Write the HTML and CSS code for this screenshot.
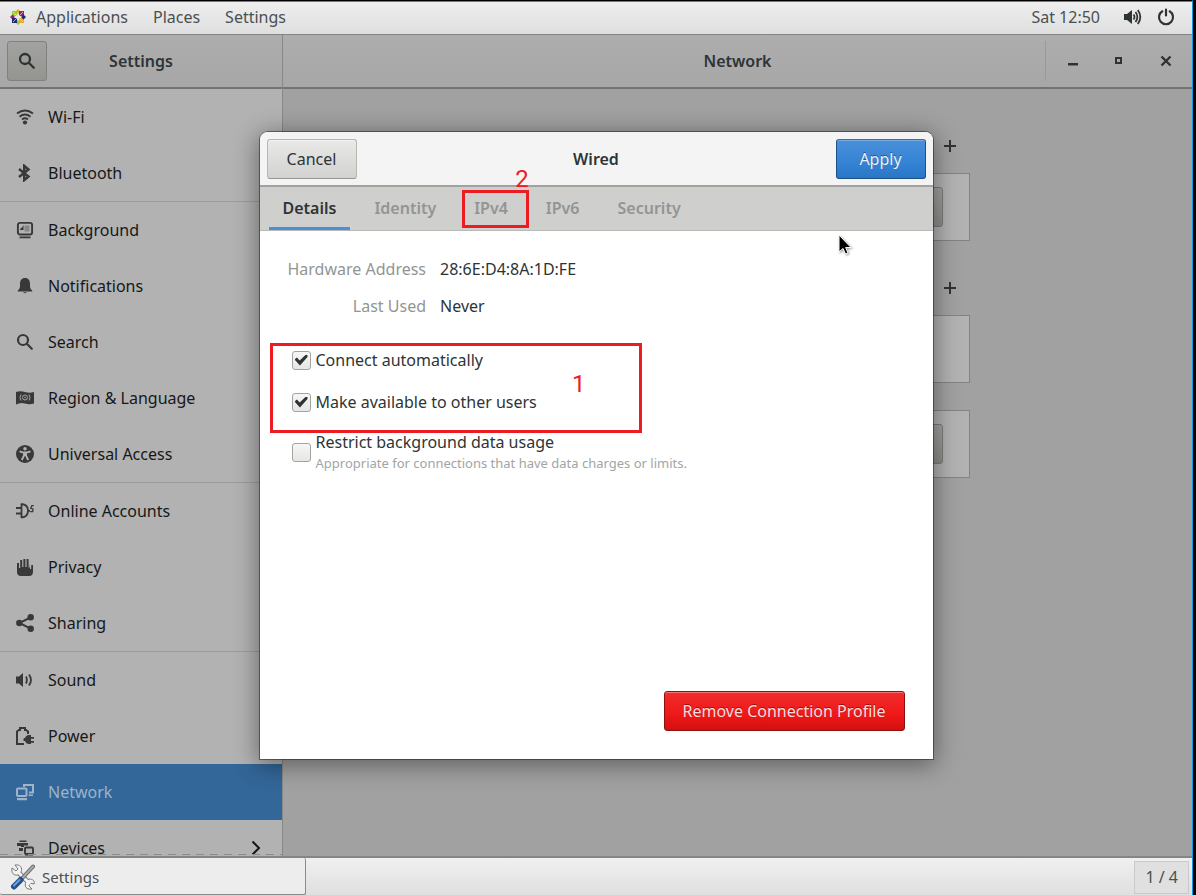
FILE: index.html
```html
<!DOCTYPE html>
<html lang="en">
<head>
<meta charset="utf-8">
<title>Network Settings</title>
<link rel="stylesheet" href="styles.css">
</head>
<body>
<div class="desktop">
  <header class="topbar">
    <nav class="topbar-menu">
      <button class="menu-item" type="button">
        <svg class="distro" viewBox="0 0 16 16" aria-hidden="true">
          <path fill="#efa724" d="M8 0l2.500 2.500L8 5 5.500 2.500zM9 9h5v5H9z"/>
          <path fill="#9ccd2a" d="M2 2h5v5H2zM8 11l2.500 2.500L8 16l-2.500-2.500z"/>
          <path fill="#932279" d="M9 2h5v5H9zM0 8l2.500-2.500L5 8l-2.500 2.500z"/>
          <path fill="#262577" d="M2 9h5v5H2zM11 8l2.500-2.500L16 8l-2.500 2.500z"/>
          <path stroke="#e8e8e8" stroke-width=".7" d="M3 3l10 10M13 3L3 13"/>
        </svg>
        Applications
      </button>
      <button class="menu-item" type="button">Places</button>
      <button class="menu-item" type="button">Settings</button>
    </nav>
    <div class="status">
      <span class="clock">Sat 12:50</span>
      <button class="status-button" type="button" aria-label="Volume">
        <svg class="icon" viewBox="0 0 18 18"><path fill="currentColor" d="M0 6h3l5-4v14l-5-4H0z"/><path fill="none" stroke="currentColor" stroke-width="1.800" d="M9.500 6.500q2 2.500 0 5M11.500 4q3.700 5 0 10M13.800 2q5 7 0 14"/></svg>
      </button>
      <button class="status-button" type="button" aria-label="Power">
        <svg class="icon" viewBox="0 0 18 18" fill="none" stroke="currentColor" stroke-width="2.200" stroke-linecap="round"><path d="M5.300 3.300a7 7 0 1 0 7.400 0M9 1.500v6"/></svg>
      </button>
    </div>
  </header>

  <main class="window">
    <aside class="sidebar">
      <div class="headerbar sidebar-header">
        <button class="search-button" type="button" aria-label="Search">
          <svg class="icon" viewBox="0 0 18 18" fill="none" stroke="currentColor" stroke-width="2.300"><circle cx="7" cy="7" r="5"/><path d="M10.800 10.800l5 5" stroke-linecap="round"/></svg>
        </button>
        <h1 class="title">Settings</h1>
      </div>
      <nav class="panel-list">
        <a class="row" href="#wifi"><svg class="icon" viewBox="0 0 18 18" fill="none" stroke="currentColor" stroke-width="1.900"><path d="M1 5.500q8-6 16 0M3.500 8.700q5.500-4.300 11 0M6 11.500q3-2.300 6 0"/><circle cx="9" cy="14.500" r="2.100" fill="currentColor" stroke="none"/></svg>Wi-Fi</a>
        <a class="row" href="#bluetooth"><svg class="icon" viewBox="0 0 18 18" fill="none" stroke="currentColor" stroke-width="2.400"><path d="M3 5l9.500 7.500L8.200 16.200V1.800l4.300 3.700L3 13"/></svg>Bluetooth</a>
        <a class="row group-start" href="#background"><svg class="icon" viewBox="0 0 18 18"><rect x="1.900" y="1.900" width="14.200" height="11.600" rx="2" fill="none" stroke="currentColor" stroke-width="1.900"/><path fill="currentColor" d="M7.500 4v5H4q0-2 2-2.500zM3.500 15.500h11v1.700h-11z"/><path fill="#888" d="M8.500 4.500h5v6h-5z"/></svg>Background</a>
        <a class="row" href="#notifications"><svg class="icon" viewBox="0 0 18 18" fill="currentColor"><path d="M9 1c3.500 0 5 2.500 5 6 0 3.500 0 4.500 2.200 6.500v1H1.800v-1C4 11.500 4 10.500 4 7c0-3.500 1.500-6 5-6zM7 15.300h4q-2 2-4 0z"/></svg>Notifications</a>
        <a class="row" href="#search"><svg class="icon" viewBox="0 0 18 18" fill="none" stroke="currentColor" stroke-width="2.200"><circle cx="7" cy="7" r="5"/><path d="M10.800 10.800l5 5" stroke-linecap="round"/></svg>Search</a>
        <a class="row" href="#region"><svg class="icon" viewBox="0 0 18 18"><path fill="currentColor" d="M0 3q4.500-1.500 9 0t9 0v11.500q-4.500 1.500-9 0t-9 1z"/><circle cx="9" cy="8.500" r="2.500" fill="none" stroke="#a5a5a5"/><circle cx="9" cy="8.500" r=".8" fill="#a5a5a5"/><path d="M5 5.500q-2 3 0 6M13 5.500q2 3 0 6" fill="none" stroke="#a5a5a5"/></svg>Region &amp; Language</a>
        <a class="row" href="#access"><svg class="icon" viewBox="0 0 18 18"><circle cx="9" cy="9" r="9" fill="currentColor"/><circle cx="9" cy="3.800" r="1.700" fill="#b2b2b2"/><path fill="none" stroke="#b2b2b2" stroke-width="1.800" d="M3.500 6.300L7.500 7.500h3l4-1.200M8 7.500v3L5.800 15M10 7.500v3l2.200 4.500M9 7v4"/></svg>Universal Access</a>
        <a class="row group-start" href="#accounts"><svg class="icon" viewBox="0 0 18 18" fill="none" stroke="currentColor"><path stroke-width="1.800" d="M0 6h5M0 11.500h5M5.500 1.500v14.500M5.500 2q6.500.500 6.500 6.800t-6.500 6.800M12 8.800h2"/><path stroke-width="1.300" d="M17.800 3.600h-2l-1 2.700 2.200.700-.300 2.600h-2.500"/></svg>Online Accounts</a>
        <a class="row" href="#privacy"><svg class="icon" viewBox="0 0 18 18"><path fill="currentColor" d="M1 5h2v5h1.200V2h2v7h1.200V1h2v8h1.200V1h2v8.500h1.200V6h.2V11h1.200V7H17v6.500Q17 18 13 18H5Q1 18 1 14z"/></svg>Privacy</a>
        <a class="row" href="#sharing"><svg class="icon" viewBox="0 0 18 18"><circle cx="3.300" cy="9" r="3.200" fill="currentColor"/><circle cx="14.700" cy="3.300" r="3.200" fill="currentColor"/><circle cx="14.700" cy="14.700" r="3.200" fill="currentColor"/><path d="M14.700 3.300L3.300 9l11.400 5.700" fill="none" stroke="currentColor" stroke-width="2"/></svg>Sharing</a>
        <a class="row group-start" href="#sound"><svg class="icon" viewBox="0 0 18 18"><path fill="currentColor" d="M0 5.500h3l4-3.500v14l-4-3.500H0z"/><path fill="none" stroke="currentColor" stroke-width="1.800" d="M10 5.500q1.700 3.500 0 7M13 3.500q4 5.500 0 11"/></svg>Sound</a>
        <a class="row" href="#power"><svg class="icon" viewBox="0 0 18 18"><path fill="none" stroke="currentColor" stroke-width="2" d="M8 17H1V4.500L3 3h1V1h5v2h1l2 1.500V7"/><path fill="currentColor" d="M8 11h1q1-3 4-3h2v2h3v1.700h-3v2.300h3v1.700h-3V17h-2q-3 0-4-3H7.500v-2z"/></svg>Power</a>
        <a class="row selected" href="#network" aria-current="page"><svg class="icon" viewBox="0 0 18 18"><rect x="1" y="5.500" width="9.500" height="7.500" rx="1" fill="none" stroke="currentColor" stroke-width="2"/><path fill="currentColor" d="M1 15h10v2.200H1zM12.500 11.500H17V13h-4.500z"/><path fill="none" stroke="currentColor" stroke-width="2" d="M8 4V2h9v7.500h-4"/></svg>Network</a>
        <a class="row" href="#devices"><svg class="icon" viewBox="0 0 18 18"><path fill="currentColor" d="M3.500 1.500h7V3h-7zM1 4h11v2.500H8V8H5V7H1zM3 9h4v3H3z"/><rect x="9" y="8.500" width="8" height="6.500" rx="1" fill="none" stroke="currentColor" stroke-width="1.900"/><path fill="currentColor" d="M9 16.500h8V18H9z"/></svg>Devices<svg class="chevron" viewBox="0 0 10 16" fill="none" stroke="currentColor" stroke-width="2"><path d="M1.500 1.500L8 8l-6.500 6.500"/></svg></a>
      </nav>
    </aside>

    <section class="content">
      <div class="headerbar content-header">
        <h2 class="title">Network</h2>
        <div class="window-controls">
          <button type="button" aria-label="Minimize"><svg viewBox="0 0 12 12"><path fill="currentColor" d="M1 8h10v2.500H1z"/></svg></button>
          <button type="button" aria-label="Maximize"><svg viewBox="0 0 12 12" fill="none" stroke="currentColor" stroke-width="2"><path d="M3 3h5v5H3z"/></svg></button>
          <button type="button" aria-label="Close"><svg viewBox="0 0 12 12" fill="none" stroke="currentColor" stroke-width="2.400"><path d="M1.500 1.500l9 9M10.500 1.500l-9 9"/></svg></button>
        </div>
      </div>
      <div class="connections">
        <div class="section-head"><button class="add" type="button" aria-label="Add connection"><svg viewBox="0 0 12 12" stroke="currentColor" stroke-width="2"><path d="M6 0v12M0 6h12"/></svg></button></div>
        <div class="card"><button class="gear" type="button" aria-label="Connection options"></button></div>
        <div class="section-head second"><button class="add" type="button" aria-label="Add VPN"><svg viewBox="0 0 12 12" stroke="currentColor" stroke-width="2"><path d="M6 0v12M0 6h12"/></svg></button></div>
        <div class="card"></div>
        <div class="card proxy"><button class="gear" type="button" aria-label="Proxy options"></button></div>
      </div>
    </section>

    <div class="overlay">
      <form class="dialog" role="dialog" aria-label="Wired">
        <div class="dialog-header">
          <button class="button" type="button">Cancel</button>
          <h2 class="title">Wired</h2>
          <button class="button primary" type="button">Apply</button>
        </div>
        <div class="tabs" role="tablist">
          <button class="tab active" type="button" role="tab" aria-selected="true">Details</button>
          <button class="tab" type="button" role="tab">Identity</button>
          <button class="tab" type="button" role="tab">IPv4<span class="callout tab-callout"><span class="callout-number">2</span></span></button>
          <button class="tab" type="button" role="tab">IPv6</button>
          <button class="tab" type="button" role="tab">Security</button>
        </div>
        <div class="dialog-body">
          <dl class="facts">
            <dt>Hardware Address</dt><dd>28:6E:D4:8A:1D:FE</dd>
            <dt>Last Used</dt><dd>Never</dd>
          </dl>
          <div class="options">
            <label class="check"><input type="checkbox" checked>Connect automatically</label>
            <label class="check"><input type="checkbox" checked>Make available to other users</label>
            <span class="callout options-callout"><span class="callout-number">1</span></span>
          </div>
          <label class="check restrict"><input type="checkbox"><span>Restrict background data usage<small>Appropriate for connections that have data charges or limits.</small></span></label>
          <button class="button danger" type="button">Remove Connection Profile</button>
        </div>
        <svg class="pointer" viewBox="0 0 14 22" aria-hidden="true"><path fill="#000" stroke="#fff" stroke-width="1" d="M1 1v17l4-3.500 2.500 5.500 2.500-1-2.300-5.500H13z"/></svg>
      </form>
    </div>
  </main>

  <footer class="taskbar">
    <button class="task" type="button">
      <svg viewBox="0 0 26 26" aria-hidden="true">
        <path d="M7 7l13 13" stroke="#777" stroke-width="5"/>
        <path d="M2 4l4 3 2-2-3-4c5-1 8 3 6 7l-3 3C4 12 1 9 2 4zM24 20l-4-1-1 3 3 3c-6 1-8-3-6-7l3-3c4 0 6 2 5 5z" fill="#f4f4f4" stroke="#777"/>
        <path d="M7 7l13 13" stroke="#f4f4f4" stroke-width="3"/>
        <path d="M23 2.500L12 14.500" stroke="#666" stroke-width="4" stroke-linecap="round"/>
        <path d="M23 2.500L12 14.500" stroke="#aaa" stroke-width="2" stroke-linecap="round"/>
        <path d="M10.500 16L4 22.500" stroke="#24518c" stroke-width="6" stroke-linecap="round"/>
        <path d="M9.500 16L4 21.500" stroke="#6f9fd8" stroke-width="2" stroke-linecap="round"/>
      </svg>
      Settings
    </button>
    <button class="pager" type="button">1 / 4</button>
  </footer>
</div>
</body>
</html>
```
FILE: styles.css
```css
* { box-sizing: border-box; }

body {
  margin: 0;
  background: #000;
  color: #2e3436;
  font: 16px/22px "Noto Sans", "Open Sans", sans-serif;
}

button { font: inherit; color: inherit; border: 0; padding: 0; background: none; }
a { color: inherit; text-decoration: none; }

.desktop {
  display: grid;
  grid-template-rows: 33px minmax(0, 1fr) 39px;
  height: 100vh;
  margin-right: 3px;
  border-top: 1px solid #000;
  border-right: 1px solid #0f9ae0;
}

.icon { width: 18px; height: 18px; flex: none; display: block; }
.title { margin: 0; font-size: 16px; font-weight: 600; text-align: center; }

/* Top panel */
.topbar {
  display: flex;
  justify-content: space-between;
  align-items: center;
  padding: 0 17px 2px 10px;
  border-top: 1px solid #0f9ae0;
  background: linear-gradient(#eeeeee, #dfdfdf);
  color: #4a4f51;
}
.topbar-menu { display: flex; gap: 25px; }
.menu-item { display: flex; align-items: center; gap: 10px; }
.distro { width: 16px; height: 16px; }
.status { display: flex; align-items: center; gap: 15px; }
.clock { padding-right: 9px; }
.status-button { color: #2e3436; }

/* Settings window */
.window {
  position: relative;
  display: grid;
  grid-template-columns: 283px minmax(0, 1fr);
  border-top: 1px solid #858583;
  overflow: hidden;
}
.headerbar {
  display: grid;
  align-items: center;
  height: 54px;
  flex: none;
  border-bottom: 2px solid #73736f;
  background: linear-gradient(#adadad, #a7a7a7);
}
.sidebar {
  position: relative;
  display: flex;
  flex-direction: column;
  min-height: 0;
  border-right: 1px solid #888886;
  background: #b2b2b2;
}
.sidebar::after {
  content: "";
  position: absolute;
  right: 0;
  bottom: 1px;
  left: 0;
  height: 1px;
  background: repeating-linear-gradient(90deg, #8c8c8c 0 8px, transparent 8px 14px);
}
.sidebar-header { grid-template-columns: 40px 1fr 40px; padding: 0 7px; }
.search-button {
  display: grid;
  place-items: center;
  height: 40px;
  border: 1px solid #81817f;
  border-radius: 3px;
  background: linear-gradient(#a2a2a0, #949491);
}
.panel-list { flex: 1; min-height: 0; overflow: hidden; }
.row {
  display: flex;
  align-items: center;
  gap: 14px;
  height: 56px;
  padding: 0 21px 1px 16px;
  color: #161819;
  line-height: 20px;
}
.row .icon { color: #383838; }
.group-start { height: 57px; border-top: 1px solid #9d9d9d; }
.selected, .row.selected .icon { color: #9db4ca; }
.selected { background: #336699; }
.chevron { width: 10px; height: 16px; margin-left: auto; }

.content { background: #a1a1a1; }
.content-header { grid-template-columns: 147px 1fr 147px; }
.content-header .title { grid-column: 2; }
.window-controls {
  display: grid;
  grid-template-columns: repeat(3, 1fr);
  height: 40px;
  padding: 0 3px 0 4px;
  border-left: 1px solid #999;
}
.window-controls svg, .add svg { width: 12px; height: 12px; display: block; margin: auto; }
.connections { width: 464px; margin: 0 auto; padding-top: 51px; }
.section-head { display: flex; justify-content: flex-end; height: 33px; padding: 0 14px; }
.second { height: 74px; padding-top: 41px; }
.add { display: grid; height: 12px; }
.card {
  display: flex;
  justify-content: flex-end;
  height: 68px;
  padding: 13px 26px;
  border: 1px solid #838381;
  background: #b2b2b2;
}
.proxy { margin-top: 27px; }
.gear { width: 48px; border: 1px solid #7c7c7a; border-radius: 3px; background: linear-gradient(#a2a2a0, #8d8d8a); }

/* Wired connection dialog */
.overlay { position: absolute; inset: 0; display: grid; place-items: center; }
.dialog {
  position: relative;
  display: flex;
  flex-direction: column;
  width: 673px;
  min-height: 627px;
  border-radius: 8px 8px 0 0;
  background: #fff;
  box-shadow: 0 0 0 1px rgba(0, 0, 0, .4), 0 4px 24px 2px rgba(0, 0, 0, .42);
}
.dialog-header {
  display: grid;
  grid-template-columns: 90px 1fr 90px;
  align-items: center;
  height: 55px;
  padding: 0 7px;
  border-bottom: 2px solid #a1a19d;
  border-radius: 8px 8px 0 0;
  background: #f4f4f4;
}
.button {
  height: 40px;
  padding: 0 18px;
  border: 1px solid #b6b6b3;
  border-bottom-color: #969692;
  border-radius: 3px;
  background: linear-gradient(#e9e9e8, #d2d2d0);
  box-shadow: inset 0 1px rgba(255, 255, 255, .4);
}
.primary {
  border-color: #1c5187;
  border-top-color: #2a71b8;
  background: linear-gradient(#4a90d9, #3583d5 60%, #2a76c6);
  box-shadow: inset 0 1px rgba(255, 255, 255, .25);
  color: #e8f1fa;
  text-shadow: 0 -1px rgba(0, 0, 0, .4);
}
.danger {
  margin: auto 0 0 auto;
  border-color: #8e1010;
  background: linear-gradient(#f22c2c, #ef1818 60%, #d30f0f);
  box-shadow: inset 0 1px rgba(255, 255, 255, .35);
  color: #fbdcdc;
  text-shadow: 0 -1px rgba(0, 0, 0, .4);
}

.tabs {
  display: flex;
  gap: 10px;
  height: 44px;
  padding: 0 9px;
  border-bottom: 1px solid #b9b9b5;
  background: #cfcfcd;
}
.tab {
  position: relative;
  padding: 2px 14px 0;
  border-bottom: 3px solid transparent;
  color: #929594;
  font-weight: 600;
}
.active { border-color: #4a90d9; color: #2e3436; }

.dialog-body {
  display: flex;
  flex: 1;
  flex-direction: column;
  align-items: flex-start;
  padding: 27px 28px 28px;
}
.facts {
  display: grid;
  grid-template-columns: auto auto;
  gap: 15px 14px;
  margin: 0 0 32px;
}
dt { color: #929594; text-align: right; }
dd { margin: 0; }

.options {
  position: relative;
  display: grid;
  gap: 20px;
}
.check { display: flex; align-items: center; gap: 5px; margin-left: 4px; }
.check input {
  appearance: none;
  display: grid;
  place-items: center;
  width: 19px;
  height: 19px;
  flex: none;
  margin: 0;
  border: 1px solid #a3a39f;
  border-radius: 3px;
  background: linear-gradient(#f6f6f6, #e6e6e5);
}
.check input:checked::before {
  content: "";
  width: 13px;
  height: 11px;
  background: #2e3436;
  clip-path: polygon(0 45%, 18% 28%, 40% 55%, 88% 0, 100% 0, 100% 22%, 42% 100%);
}
.restrict { margin-top: 18px; }
.restrict small { display: block; color: #a2a5a4; font-size: 13px; line-height: 20px; }

/* Numbered red callouts */
.callout { position: absolute; border: 3px solid #ed1c24; pointer-events: none; }
.callout-number {
  position: absolute;
  color: #ed1c24;
  font: 24px/24px Roboto, sans-serif;
}
.tab-callout { inset: 3px -7px -1px 2px; }
.tab-callout .callout-number { right: -3px; bottom: 34px; }
.options-callout { top: -6px; left: -18px; width: 372px; height: 90px; }
.options-callout .callout-number { top: 26px; right: 53px; }

.pointer { position: absolute; top: 102px; right: 81px; width: 14px; height: 22px; filter: drop-shadow(1px 1px 1px rgba(0, 0, 0, .4)); }

/* Window list */
.taskbar {
  display: flex;
  justify-content: space-between;
  border-top: 2px solid #858583;
  background: linear-gradient(#f0f0f0, #dfdfdf);
  color: #4a4f51;
}
.task {
  display: flex;
  align-items: center;
  gap: 6px;
  width: 306px;
  padding: 2px 0 0 10px;
  border-right: 1px solid #8b8b89;
  border-bottom: 1px solid #8b8b89;
  border-radius: 2px;
  background: #ededed;
  font-size: 15px;
}
.task svg { width: 26px; height: 26px; fill: none; }
.pager {
  margin: 3px 3px 1px 0;
  padding: 0 10px 2px;
  border: 1px solid #cacaca;
  background: #e0e0e0;
}
```
